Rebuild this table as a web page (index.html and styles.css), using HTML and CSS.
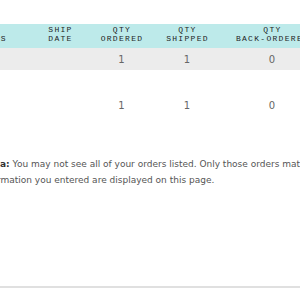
FILE: index.html
```html
<!DOCTYPE html>
<html>
<head>
<meta charset="utf-8">
<link rel="stylesheet" href="styles.css">
</head>
<body>
<div class="page">
  <table class="orders">
    <colgroup>
      <col class="c0"><col class="c1"><col class="c2"><col class="c3"><col class="c4">
    </colgroup>
    <thead>
      <tr>
        <th>STATUS</th>
        <th>SHIP<br>DATE</th>
        <th>QTY<br>ORDERED</th>
        <th>QTY<br>SHIPPED</th>
        <th>QTY<br>BACK-ORDERED</th>
      </tr>
    </thead>
    <tbody>
      <tr class="odd">
        <td></td><td></td><td>1</td><td>1</td><td>0</td>
      </tr>
      <tr class="even">
        <td></td><td></td><td>1</td><td>1</td><td>0</td>
      </tr>
    </tbody>
  </table>
  <p class="note">
    <span class="line first"><b>Search Criteria:</b> You may not see all of your orders listed. Only those orders matching the</span>
    <span class="line second">information you entered are displayed on this page.</span>
  </p>
</div>
<div class="rule"></div>
</body>
</html>
```
FILE: styles.css
```css
html, body {
  margin: 0;
  padding: 0;
  background: #fff;
  overflow: hidden;
}
.page {
  width: 300px;
  height: 286px;
  overflow: hidden;
  padding-top: 24px;
  box-sizing: border-box;
}
.orders {
  margin-left: -54px;
  border-collapse: collapse;
  table-layout: fixed;
  width: 377px;
}
.c0 { width: 84px; }
.c1 { width: 60px; }
.c2 { width: 63px; }
.c3 { width: 68px; }
.c4 { width: 102px; }
.orders th {
  background: #bdeaea;
  height: 24px;
  padding: 0 0 5px 1px;
  box-sizing: border-box;
  font-family: "Liberation Mono", monospace;
  font-weight: normal;
  font-size: 8px;
  line-height: 9px;
  letter-spacing: 1.3px;
  color: #1e1e1e;
  text-align: center;
  vertical-align: bottom;
  white-space: nowrap;
}
.orders td {
  padding: 0;
  text-align: center;
  vertical-align: middle;
  font-family: "DejaVu Sans", sans-serif;
  font-size: 10px;
  color: #666;
}
.orders tr.odd td {
  background: #ececec;
  height: 22px;
}
.orders tr.even td {
  height: 70px;
}
.note {
  margin: 16px 0 0;
  font-family: "DejaVu Sans", sans-serif;
  font-size: 9px;
  line-height: 16px;
  color: #555;
  white-space: nowrap;
}
.line {
  display: block;
}
.first {
  margin-left: -70px;
}
.second {
  margin-left: -20px;
}
.note b {
  color: #333;
}
.rule {
  height: 2px;
  background: #e0e0e0;
}
```
